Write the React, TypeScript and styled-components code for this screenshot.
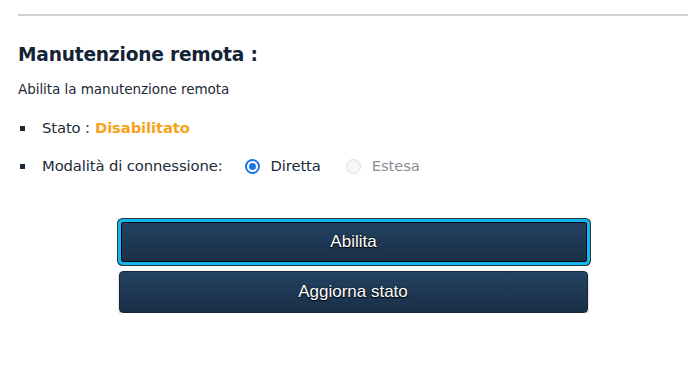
import React from "react";
import styled, { createGlobalStyle } from "styled-components";

const Global = createGlobalStyle`
  html, body { margin: 0; padding: 0; background: #fff; }
  body { font-family: "DejaVu Sans", Verdana, sans-serif; }
`;

const Page = styled.div`
  padding: 14px 12px 0 18px;
  display: flex;
  flex-direction: column;
`;

const Rule = styled.div`
  height: 2px;
  background: #d0d0d0;
`;

const Title = styled.h2`
  margin: 27px 0 0 0;
  font-family: "DejaVu Sans", Verdana, sans-serif;
  font-weight: bold;
  font-size: 18.6px;
  line-height: 24px;
  color: #132436;
  letter-spacing: -0.2px;
`;

const Desc = styled.p`
  margin: 13px 0 0 0;
  font-family: "DejaVu Sans", sans-serif;
  font-size: 13.5px;
  line-height: 18px;
  color: #1b2a38;
  letter-spacing: -0.05px;
`;

const List = styled.ul`
  list-style: none;
  margin: 20px 0 0 0;
  padding: 0;
  display: flex;
  flex-direction: column;
  gap: 18px;
`;

const Item = styled.li`
  display: flex;
  align-items: center;
  font-family: "DejaVu Sans", sans-serif;
  font-size: 14.8px;
  line-height: 20px;
  color: #1b2a38;
  letter-spacing: -0.12px;
  &::before {
    content: "";
    width: 5px;
    height: 5px;
    background: #1b2a38;
    margin: 0 17px 0 2px;
    flex: none;
  }
`;

const Status = styled.span`
  color: #f7a21b;
  font-weight: bold;
  margin-left: 5px;
`;

const Radio = styled.span<{ $checked?: boolean; $disabled?: boolean }>`
  position: relative;
  display: inline-block;
  box-sizing: border-box;
  width: 15px;
  height: 15px;
  border-radius: 50%;
  margin: 0 11px 0 0;
  border: ${(p) => (p.$checked ? "2px solid #1a73e8" : "1px solid #dedede")};
  background: ${(p) => (p.$disabled ? "#f7f7f7" : "#fff")};
  flex: none;
  &::after {
    content: "";
    display: ${(p) => (p.$checked ? "block" : "none")};
    position: absolute;
    left: 2px;
    top: 2px;
    width: 7px;
    height: 7px;
    border-radius: 50%;
    background: #1a73e8;
  }
`;

const Option = styled.span<{ $disabled?: boolean }>`
  display: inline-flex;
  align-items: center;
  color: ${(p) => (p.$disabled ? "#8a9097" : "#1b2a38")};
  margin-left: ${(p) => (p.$disabled ? "25px" : "22px")};
`;

const Buttons = styled.div`
  margin-top: 46px;
  display: flex;
  flex-direction: column;
  align-items: center;
  gap: 9px;
`;

const Button = styled.button<{ $focused?: boolean }>`
  width: ${(p) => (p.$focused ? "466px" : "469px")};
  height: ${(p) => (p.$focused ? "40px" : "42px")};
  box-sizing: border-box;
  border: 1px solid ${(p) => (p.$focused ? "#05090e" : "#16263a")};
  border-radius: ${(p) => (p.$focused ? "2px" : "4px")};
  background: linear-gradient(to bottom, #234261, #1a2f47);
  color: #fff;
  font-family: "Liberation Sans", Arial, sans-serif;
  font-size: 17px;
  padding: 0;
  text-shadow: 0 1px 1px #000, 0 0 2px rgba(0, 0, 0, 0.8);
  box-shadow: ${(p) =>
    p.$focused
      ? "0 0 0 3px #12b7ef, 0 0 0 4px #2a3642"
      : "0 1px 2px rgba(0,0,0,0.35)"};
  margin-left: ${(p) => (p.$focused ? "1px" : "0")};
  cursor: pointer;
`;

export default function App() {
  return (
    <>
      <Global />
      <Page>
        <Rule />
        <Title>Manutenzione remota :</Title>
        <Desc>Abilita la manutenzione remota</Desc>
        <List>
          <Item>
            Stato :<Status>Disabilitato</Status>
          </Item>
          <Item>
            Modalità di connessione:
            <Option>
              <Radio $checked />
              Diretta
            </Option>
            <Option $disabled>
              <Radio $disabled />
              Estesa
            </Option>
          </Item>
        </List>
        <Buttons>
          <Button $focused>Abilita</Button>
          <Button>Aggiorna stato</Button>
        </Buttons>
      </Page>
    </>
  );
}
